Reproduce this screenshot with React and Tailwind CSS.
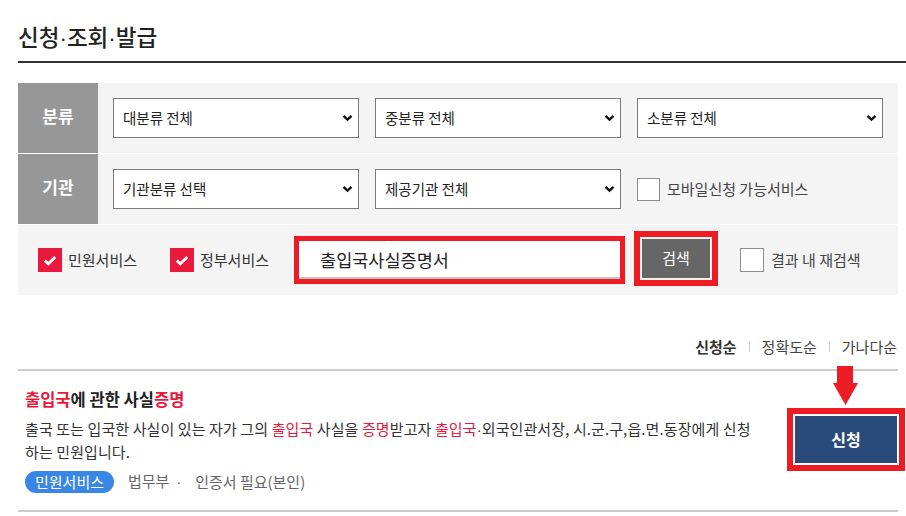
import { useState } from "react";

const font = { fontFamily: '"Malgun Gothic", "Noto Sans CJK KR", "Noto Sans", sans-serif' };

// CJK fonts draw the middle dot full width; take it from a Latin face like the reference
const Dot = () => <span className="font-['Liberation_Sans']">·</span>;

const Chevron = () => (
  <svg width="11" height="8" viewBox="0 0 11 8" className="pointer-events-none absolute right-[6px] top-1/2 -translate-y-1/2">
    <path d="M1.5 1.8 L5.5 5.6 L9.5 1.8" fill="none" stroke="#111" strokeWidth="2.4" />
  </svg>
);

const Select = ({ value, options }) => (
  <div className="relative w-[246px] h-[40px]">
    <select
      defaultValue={value}
      className="appearance-none w-full h-full bg-white border border-[#7b7a82] pl-[9px] text-[14.5px] text-[#222] outline-none"
    >
      {options.map((o) => (
        <option key={o}>{o}</option>
      ))}
    </select>
    <Chevron />
  </div>
);

const RedCheck = ({ label }) => (
  <label className="flex items-center gap-[6px] text-[15px] text-[#333]">
    <span className="w-[24px] h-[24px] bg-[#e8193c] flex items-center justify-center">
      <svg width="14" height="11" viewBox="0 0 14 11">
        <path d="M1.8 5.6 L5.3 8.8 L12.2 2" fill="none" stroke="#fff" strokeWidth="2.8" />
      </svg>
    </span>
    {label}
  </label>
);

const EmptyCheck = ({ label, size = "w-[24px] h-[24px]" }) => (
  <label className="flex items-center gap-[7px] text-[15px] text-[#444]">
    <span className={`${size} bg-white border border-[#8c8c8c]`} />
    {label}
  </label>
);

const Hl = ({ children }) => <span className="text-[#e8193c]">{children}</span>;

export default function App() {
  const [query, setQuery] = useState("출입국사실증명서");

  return (
    <div className="w-[906px] h-[516px] bg-white overflow-hidden pl-[18px]" style={font}>
      {/* title */}
      <div className="h-[63px] border-b-2 border-[#333] pt-[20px]">
        <h1 className="text-[22.5px] leading-[32px] text-[#222] font-medium">
          신청<Dot />조회<Dot />발급
        </h1>
      </div>

      {/* filter panel */}
      <div className="w-[880px] mt-[20px] flex flex-col gap-px">
        <div className="h-[70px] bg-[#f4f4f4] flex">
          <div className="w-[80px] bg-[#979797] text-white text-[17px] font-bold flex items-center justify-center pb-[4px]">
            분류
          </div>
          <div className="flex items-center gap-[16px] pl-[15px]">
            <Select value="대분류 전체" options={["대분류 전체"]} />
            <Select value="중분류 전체" options={["중분류 전체"]} />
            <Select value="소분류 전체" options={["소분류 전체"]} />
          </div>
        </div>
        <div className="h-[70px] bg-[#f4f4f4] flex">
          <div className="w-[80px] bg-[#979797] text-white text-[17px] font-bold flex items-center justify-center pb-[4px]">
            기관
          </div>
          <div className="flex items-center gap-[16px] pl-[15px]">
            <Select value="기관분류 선택" options={["기관분류 선택"]} />
            <Select value="제공기관 전체" options={["제공기관 전체"]} />
            <EmptyCheck label="모바일신청 가능서비스" size="w-[23px] h-[23px]" />
          </div>
        </div>
        <div className="h-[70px] bg-[#f4f4f4] flex items-center pl-[20px]">
          <RedCheck label="민원서비스" />
          <div className="ml-[33px]">
            <RedCheck label="정부서비스" />
          </div>
          <div className="ml-[25px] w-[331px] h-[48px] border-[5px] border-[#ed1c24] bg-[#f4f4f4]">
            <input
              value={query}
              onChange={(e) => setQuery(e.target.value)}
              className="w-full h-full bg-white border-b-2 border-[#c4c4c4] pl-[21px] text-[17.5px] text-[#222] outline-none"
            />
          </div>
          <div className="ml-[9px] w-[84px] h-[55px] border-[6px] border-[#ed1c24] bg-[#f4f4f4] p-[2px] mt-[-4px]">
            <button className="w-full h-full bg-[#666] text-white text-[15px]">검색</button>
          </div>
          <div className="ml-[22px]">
            <EmptyCheck label="결과 내 재검색" />
          </div>
        </div>
      </div>

      {/* sort */}
      <div className="w-[880px] mt-[42px] h-[20px] flex items-center justify-end gap-[12px] text-[15px] text-[#444]">
        <span className="font-bold text-[#333]">신청순</span>
        <span className="w-px h-[10px] bg-[#ccc]" />
        <span>정확도순</span>
        <span className="w-px h-[10px] bg-[#ccc]" />
        <span className="pr-px">가나다순</span>
      </div>

      {/* result */}
      <div className="relative w-[880px] mt-[12px] border-t-2 border-b-2 border-[#ccc] h-[143px] flex items-center pl-[7px]">
        <div className="flex-1 pt-px">
          <div className="text-[16.5px] leading-[22px] font-bold text-[#222]">
            <Hl>출입국</Hl>에 관한 사실<Hl>증명</Hl>
          </div>
          <p className="mt-[8px] text-[15px] leading-[22px] text-[#333] tracking-[0.1px]">
            출국 또는 입국한 사실이 있는 자가 그의 <Hl>출입국</Hl> 사실을 <Hl>증명</Hl>받고자 <Hl>출입국</Hl>
            <Dot />외국인관서장, 시.군.구,읍.면.동장에게 신청
            <br />
            하는 민원입니다.
          </p>
          <div className="mt-[7px] flex items-center text-[15px] text-[#666]">
            <span className="h-[22px] px-[10px] rounded-full bg-[#3a86e4] text-white flex items-center">민원서비스</span>
            <span className="ml-[14px]">
              법무부 &nbsp;<Dot />
            </span>
            <span className="ml-[14px]">인증서 필요(본인)</span>
          </div>
        </div>
        <div className="w-[118px] h-[63px] border-[6px] border-[#ed1c24] p-[2px] mr-[-7px] mt-[-3px]">
          <button className="w-full h-full bg-[#2a4a7b] text-white text-[16px] font-bold">신청</button>
        </div>
        <svg className="absolute left-[815px] top-[-5px]" width="25" height="39" viewBox="0 0 25 39">
          <path d="M4 0 H20 V17 H25 L12.5 39 L0 17 H4 Z" fill="#ed1c24" />
        </svg>
      </div>
    </div>
  );
}
